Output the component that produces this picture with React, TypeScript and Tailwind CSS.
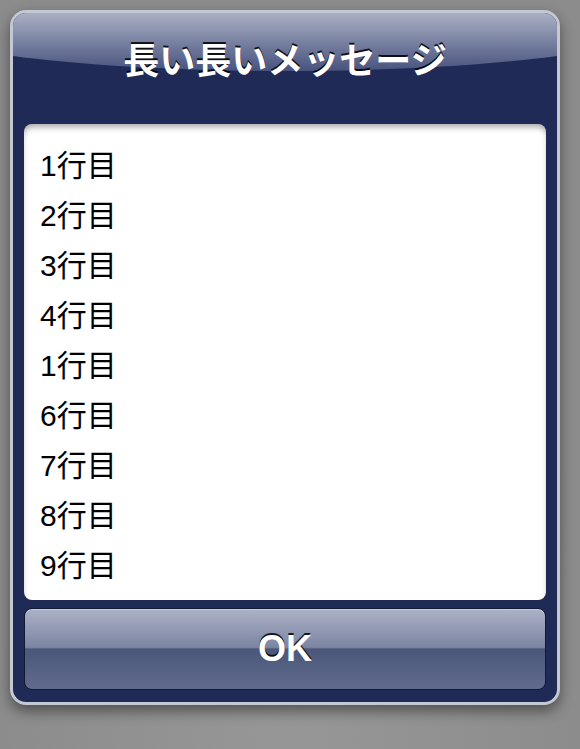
const rows = ['1行目', '2行目', '3行目', '4行目', '1行目', '6行目', '7行目', '8行目', '9行目'];

const font = "font-['Liberation_Sans','Noto_Sans_CJK_JP',sans-serif]";

export default function App() {
  return (
    <div className={`w-[580px] h-[749px] bg-[radial-gradient(ellipse_at_50%_90%,#979797_0%,#8c8c8c_70%)] pt-[10px] pl-[10px] ${font}`}>
      <div className="relative flex h-[695px] w-[550px] flex-col overflow-hidden rounded-[16px] border-[3px] border-[#c4c8d2] bg-[#1f2a56] px-[11px] pb-[12px] shadow-[0_6px_14px_rgba(0,0,0,0.45)]">
        {/* gloss on the header */}
        <div className="absolute left-[-128px] top-[-54px] h-[112px] w-[800px] rounded-[50%] bg-[linear-gradient(to_bottom,#a6acc1_50%,#48537e_100%)]" />

        <div className="relative flex h-[111px] items-center justify-center pb-[13px]">
          <h1 className="text-[36px] font-bold leading-none text-white [text-shadow:0_-2px_0_rgba(0,0,0,0.85)]">
            長い長いメッセージ
          </h1>
        </div>

        <div className="relative h-[476px] overflow-hidden rounded-[8px] bg-white pl-[16px] pt-[17px] shadow-[inset_0_5px_6px_-2px_rgba(0,0,0,0.35)]">
          {rows.map((row, i) => (
            <div key={i} className="h-[50px] text-[30px] leading-[50px] text-black">
              {row}
            </div>
          ))}
        </div>

        <button className="relative mt-[8px] flex h-[82px] items-center justify-center rounded-[8px] border border-[#111936] bg-[linear-gradient(to_bottom,#acb2c6_0%,#7b84a2_48%,#4b577a_50%,#616c8d_100%)] shadow-[inset_0_1px_0_rgba(255,255,255,0.35)]">
          <span className="text-[36px] font-bold leading-none text-white [text-shadow:0_-2px_0_rgba(0,0,0,0.85)]">
            OK
          </span>
        </button>
      </div>
    </div>
  );
}
